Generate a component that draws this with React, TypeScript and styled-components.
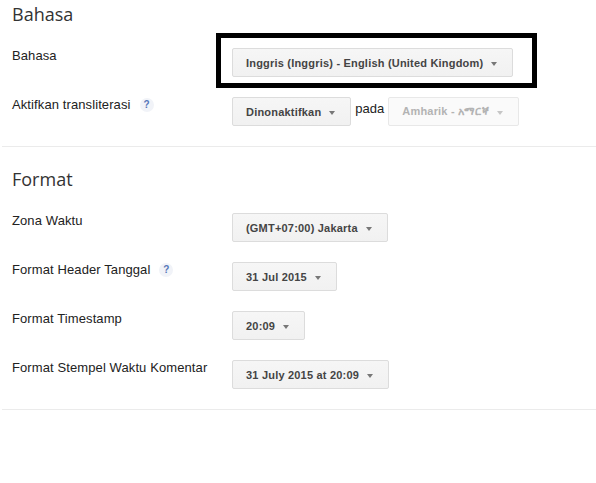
import { createGlobalStyle } from "styled-components";
import styled from "styled-components";

const GlobalStyle = createGlobalStyle`
  body {
    margin: 0;
    background: #fff;
    font-family: "Liberation Sans", Arial, sans-serif;
  }
`;

const Page = styled.div`
  width: 594px;
  margin-left: 2px;
`;

const Section = styled.section<{ top: number; bottom: number }>`
  padding: ${(p) => p.top}px 10px ${(p) => p.bottom}px;
  border-bottom: 1px solid #ebebeb;
`;

const Heading = styled.h2`
  margin: 0 0 22px;
  font-family: "Open Sans", "Liberation Sans", sans-serif;
  font-size: 18px;
  line-height: 24px;
  font-weight: 400;
  color: #333;
`;

const Rows = styled.div`
  display: flex;
  flex-direction: column;
  gap: 20px;
`;

const Row = styled.div`
  display: flex;
  align-items: flex-start;
  height: 29px;
`;

const Label = styled.div`
  width: 220px;
  flex: none;
  display: flex;
  align-items: center;
  gap: 9px;
  font-size: 13px;
  line-height: 16px;
  letter-spacing: 0.1px;
  color: #222;
`;

const Help = styled.span`
  display: inline-flex;
  align-items: center;
  justify-content: center;
  width: 14px;
  height: 14px;
  border-radius: 50%;
  background: #f1f3f8;
  color: #5677b9;
  font-size: 10px;
  font-weight: bold;
`;

const Controls = styled.div`
  display: flex;
  align-items: flex-start;
`;

const Anchor = styled.div`
  position: relative;
`;

const Highlight = styled.div`
  position: absolute;
  top: -15px;
  left: -16px;
  right: -24px;
  bottom: -11px;
  border: 5px solid #000;
  pointer-events: none;
`;

const Menu = styled.div<{ disabled?: boolean }>`
  box-sizing: border-box;
  height: 29px;
  display: inline-flex;
  align-items: center;
  gap: 8px;
  padding: 0 15px 0 13px;
  border: 1px solid ${(p) => (p.disabled ? "#e8e8e8" : "#dcdcdc")};
  border-radius: 2px;
  background: ${(p) =>
    p.disabled ? "#fafafa" : "linear-gradient(#f6f6f6, #f1f1f1)"};
  color: ${(p) => (p.disabled ? "#b3b3b3" : "#444")};
  font-size: 11px;
  font-weight: bold;
  letter-spacing: 0.2px;
  white-space: nowrap;
  cursor: default;
`;

const Caret = styled.span<{ disabled?: boolean }>`
  width: 0;
  height: 0;
  margin-top: 2px;
  border-left: 3.5px solid transparent;
  border-right: 3.5px solid transparent;
  border-top: 4px solid ${(p) => (p.disabled ? "#c6c6c6" : "#777")};
`;

const Between = styled.span`
  margin: 0 4px;
  padding-top: 4px;
  font-size: 13px;
  line-height: 16px;
  color: #222;
`;

type Field = { label: string; value: string; help?: boolean };

const formatFields: Field[] = [
  { label: "Zona Waktu", value: "(GMT+07:00) Jakarta" },
  { label: "Format Header Tanggal", value: "31 Jul 2015", help: true },
  { label: "Format Timestamp", value: "20:09" },
  { label: "Format Stempel Waktu Komentar", value: "31 July 2015 at 20:09" },
];

const Dropdown = ({ value, disabled }: { value: string; disabled?: boolean }) => (
  <Menu disabled={disabled}>
    {value}
    <Caret disabled={disabled} />
  </Menu>
);

const App = () => {
  return (
    <Page>
      <GlobalStyle />
      <Section top={2} bottom={20}>
        <Heading>Bahasa</Heading>
        <Rows>
          <Row>
            <Label>Bahasa</Label>
            <Anchor>
              <Dropdown value="Inggris (Inggris) - English (United Kingdom)" />
              <Highlight />
            </Anchor>
          </Row>
          <Row>
            <Label>
              Aktifkan transliterasi <Help>?</Help>
            </Label>
            <Controls>
              <Dropdown value="Dinonaktifkan" />
              <Between>pada</Between>
              <Dropdown value="Amharik - አማርኛ" disabled />
            </Controls>
          </Row>
        </Rows>
      </Section>
      <Section top={20} bottom={20}>
        <Heading>Format</Heading>
        <Rows>
          {formatFields.map((f, idx) => (
            <Row key={`format_${idx}`}>
              <Label>
                {f.label}
                {f.help && <Help>?</Help>}
              </Label>
              <Dropdown value={f.value} />
            </Row>
          ))}
        </Rows>
      </Section>
    </Page>
  );
};

export default App;
